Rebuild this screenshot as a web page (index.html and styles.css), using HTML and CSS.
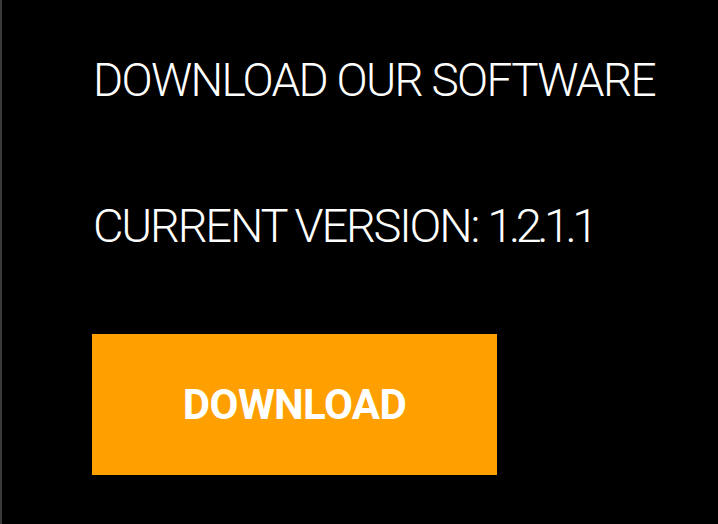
FILE: index.html
```html
<!DOCTYPE html>
<html>
<head>
<meta charset="utf-8">
<link rel="stylesheet" href="styles.css">
</head>
<body>
<main class="panel">
  <h1 class="title">DOWNLOAD OUR SOFTWARE</h1>
  <p class="version">CURRENT VERSION: <span class="num">1.2.1.1</span></p>
  <a class="btn" href="#">DOWNLOAD</a>
</main>
</body>
</html>
```
FILE: styles.css
```css
html, body {
  margin: 0;
  padding: 0;
  background: #000;
  height: 100%;
}
.panel {
  box-sizing: border-box;
  height: 524px;
  border-left: 2px solid #3a3a3a;
  padding: 57px 0 0 90px;
  display: flex;
  flex-direction: column;
  align-items: flex-start;
  font-family: Roboto, "Liberation Sans", sans-serif;
  color: #fff;
}
.title {
  margin: 0 0 0 1px;
  font-size: 46px;
  line-height: 46px;
  font-weight: 300;
  letter-spacing: -1.7px;
}
.version {
  margin: 99px 0 0 1px;
  font-size: 47px;
  line-height: 47px;
  font-weight: 300;
  letter-spacing: -2.2px;
}
.num {
  letter-spacing: -4.5px;
}
.btn {
  margin-top: 85px;
  width: 405px;
  height: 141px;
  background: #ffa000;
  color: #fff;
  text-decoration: none;
  display: flex;
  align-items: center;
  justify-content: center;
  font-size: 42px;
  font-weight: 700;
  letter-spacing: -0.6px;
}
```
